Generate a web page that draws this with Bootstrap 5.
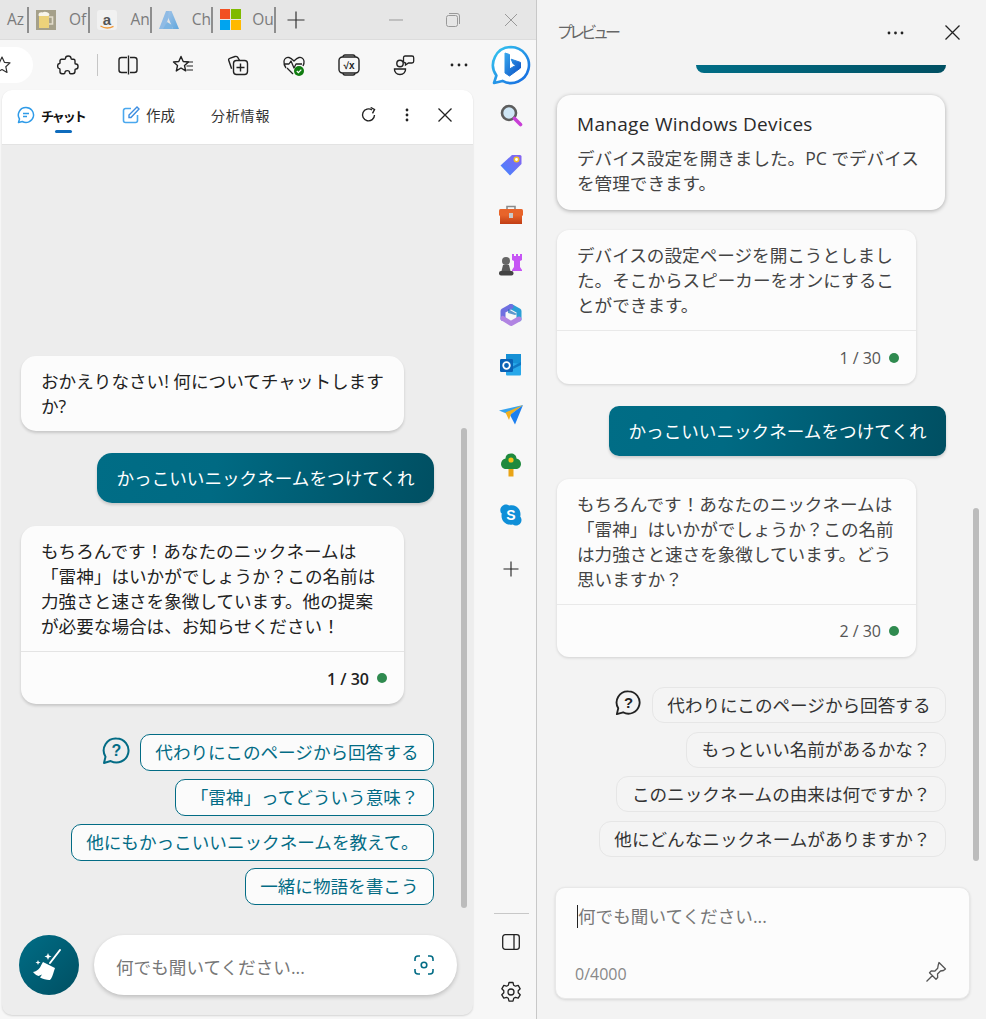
<!DOCTYPE html>
<html lang="ja">
<head>
<meta charset="utf-8">
<title>Edge サイドバー</title>
<link rel="stylesheet" href="https://cdn.jsdelivr.net/npm/bootstrap@5.3.0/dist/css/bootstrap.min.css">
<style>
html,body{margin:0;height:100%;overflow:hidden}
body{width:986px;height:1019px;background:#f3f3f3;font-family:"Open Sans","Noto Sans CJK JP",sans-serif;font-size:17.6px;line-height:25px;color:#222}
svg{display:block;flex:none}
.browser-side{width:537px;height:1019px;border-right:1px solid #c8c8c8;background:#f7f7f7;flex:none}
.tabstrip{height:40px;background:#e6e6e6;font-size:15.5px;color:#7b7b7b;border-bottom:1px solid #dcdcdc}
.tabcell{width:61.4px;height:26px;border-right:2px solid #8e8e8e;padding-left:7px;gap:13px;white-space:nowrap;flex:none}
.tabcell.first{width:29px}
.tabcell.last{width:62.5px;gap:11px}
.newtab-plus{margin-left:10px}
.winbtn{position:absolute;top:0;height:40px;width:40px}
.tool-area{width:473px;flex:none}
.toolbar{height:50px;flex:none}
.addr-pill{width:33px;height:36px;background:#fff;border-radius:0 18px 18px 0;flex:none;overflow:hidden}
.toolslot{width:55.2px;flex:none}
.tool-sep{width:1px;height:22px;background:#c6c6c6;flex:none;margin:0 2px 0 2.300px}
.copilot-panel{margin-left:2px;height:925px;width:471px;background:#ededed;border-radius:10px;box-shadow:0 1px 2px rgba(0,0,0,.14);overflow:hidden}
.panel-head{height:55px;background:#fff;border-bottom:1px solid #e3e3e3;font-size:14px;flex:none}
.ptab{font-size:14px;color:#333;letter-spacing:.5px;white-space:nowrap;line-height:20px;position:absolute;top:16px}
.ptab.on{font-weight:700;color:#111;letter-spacing:-2px;font-size:13px}
.ptab-line{position:absolute;left:53px;top:40px;width:17px;height:3px;background:#0f6cbd;border-radius:2px}
.chat-flow{padding:0 39px 0 19px}
.msg-in{background:#fcfcfc;border:0;border-radius:15px;width:383px;box-shadow:0 2px 3px rgba(0,0,0,.16)}
.msg-body{padding:12.5px 20px;color:#222}
.msg-foot{background:transparent;border-top:1px solid #e4e4e4;border-radius:0;height:53px;padding:0 17px 0 0;color:#222;font-size:16px;font-weight:600}
.foot-label{padding-top:2px}
.status-dot{width:10px;height:10px;border-radius:50%;background:#2f8a4f;margin-left:8px;flex:none}
.msg-out{align-self:flex-end;height:50px;padding:0 19.5px;border-radius:15px;color:#fff;background:linear-gradient(100deg,#006d86 0%,#006a83 35%,#004f62 100%);box-shadow:0 2px 3px rgba(0,0,0,.16);white-space:nowrap}
.sugg-btn{height:37px;padding:0 14.5px;font-size:17.6px;line-height:25px;border-radius:10px;border:1px solid #036c85;background:#fbfbfb;color:#036c85;white-space:nowrap;margin-top:8px}
.sugg-btn.lead-btn{margin-top:0}
.sugg-btn.tail-btn{margin-top:7px}
.left-compose{height:60px;flex:none;margin:0 -36px 20px -2px}
.broom-btn{width:60px;height:60px;background:linear-gradient(135deg,#006d86,#004f62);flex:none}
.ask-pill{width:363px;height:60px;background:#fff;border-radius:30px;box-shadow:0 2px 4px rgba(0,0,0,.2);margin-left:15px;padding:0 22px;color:#777}
.ask-text{padding-top:4px}
.scrollthumb{position:absolute;width:6px;background:#bcbcbc;border-radius:3px}
.side-rail{width:63px;height:979px;flex:none;padding-left:13px}
.railslot{height:50px;flex:none}
.rail-sep{width:35px;height:1px;background:#c8c8c8;margin:0 auto}
.preview-pane{width:449px;height:1019px;flex:none;background:#f3f3f3;padding-left:20px;overflow:hidden}
.preview-head{height:65px;flex:none;padding-right:26px}
.preview-title{font-size:16px;color:#666;letter-spacing:-4px;white-space:nowrap}
.stub{width:250px;height:8px;margin-left:139px;border-radius:0 0 12px 12px;background:linear-gradient(100deg,#006d86,#004f62);flex:none}
.device-note{width:388px;height:115px;background:#fcfcfc;border:0;border-radius:14px;box-shadow:0 1px 4px rgba(0,0,0,.3);padding:17px 20px 0;color:#444}
.device-note h2{font-size:19px;line-height:25px;font-weight:500;color:#2a2a2a;margin:0 0 9px;letter-spacing:.3px;white-space:nowrap}
.msg-pre{background:#fcfcfc;border:0;border-radius:12px;width:359px;box-shadow:0 1px 3px rgba(0,0,0,.14)}
.msg-pre .msg-body{color:#444}
.msg-pre .msg-foot{font-weight:400;color:#555;border-color:#e9e9e9}
.msg-pre .msg-foot.tall{height:54px}
.msg-out.pre{margin-right:40px;border-radius:10px}
.sugg-soft{height:36px;padding:0 14.5px;font-size:17.6px;line-height:25px;border-radius:12px;border:1px solid #e6e6e6;background:#f4f4f4;color:#333;white-space:nowrap}
.compose-box{width:415px;height:112px;margin-left:-2px;background:#fcfcfc;border:1px solid #e8e8e8;border-radius:10px;box-shadow:0 1px 3px rgba(0,0,0,.12);color:#777;flex:none}
.caret-bar{position:absolute;left:21px;top:17px;width:1px;height:23px;background:#222}
.ph-line{padding:16px 0 0 22px}
.count-line{position:absolute;left:19px;bottom:11px;font-size:16px;color:#888}
.pin-at{position:absolute;right:22px;bottom:15px}
</style>
</head>
<body>
<svg width="0" height="0" style="position:absolute"><defs>
<linearGradient id="g-ring" x1="0" y1="0" x2="1" y2="1"><stop offset="0" stop-color="#37c8ef"/><stop offset="1" stop-color="#1467e0"/></linearGradient>
<linearGradient id="g-b" x1="0" y1="0" x2="1" y2="1"><stop offset="0" stop-color="#37a8ee"/><stop offset="1" stop-color="#0b4fc4"/></linearGradient>
<linearGradient id="g-tag" x1="0" y1="1" x2="1" y2="0"><stop offset="0" stop-color="#3f86ff"/><stop offset="1" stop-color="#8a63f0"/></linearGradient>
<linearGradient id="g-box" x1="0" y1="0" x2="0" y2="1"><stop offset="0" stop-color="#e8642a"/><stop offset="1" stop-color="#c13d14"/></linearGradient>
<linearGradient id="g-az" x1="0" y1="0" x2="1" y2="1"><stop offset="0" stop-color="#9fc3e8"/><stop offset="1" stop-color="#5fa6dc"/></linearGradient>
</defs></svg>

<div class="d-flex">
<section class="browser-side d-flex flex-column">
  <div class="tabstrip d-flex align-items-center position-relative flex-none">
    <div class="tabcell first d-flex align-items-center">Az</div>
    <div class="tabcell d-flex align-items-center">
      <svg width="20" height="20" viewBox="0 0 20 20"><rect width="20" height="20" fill="#a5a08a"/><path d="M3 5h10v13H3z" fill="#ecd27a"/><path d="M13 7h3.500v7H13" fill="none" stroke="#e2dccb" stroke-width="1.600"/><path d="M2.500 5c0-3 3-3 4-2.500 2-1.500 5-.5 6.500 1 1 1 0 2.500-1 2.500H4C3 6 2.500 6 2.500 5z" fill="#f8f5ea"/></svg><span>Of</span></div>
    <div class="tabcell d-flex align-items-center">
      <svg width="20" height="20" viewBox="0 0 20 20"><rect width="20" height="20" rx="3" fill="#f1f1f1"/><text x="10" y="14.500" text-anchor="middle" font-family="Liberation Sans,sans-serif" font-size="15" font-weight="700" fill="#555">a</text><path d="M3.500 16c4 2.400 9 2.400 13 .3" fill="none" stroke="#f29a38" stroke-width="1.400"/></svg><span>An</span></div>
    <div class="tabcell d-flex align-items-center">
      <svg width="20" height="20" viewBox="0 0 20 20"><path d="M7 1h5l-6.500 18H0z" fill="#8fbbe5"/><path d="M10 1h2.500L20 19h-6L9 7z" fill="url(#g-az)"/><path d="M8 12l5 3 1 4H4z" fill="#7cb4e2"/></svg><span>Ch</span></div>
    <div class="tabcell last d-flex align-items-center">
      <svg width="21" height="21" viewBox="0 0 21 21"><rect width="10" height="10" fill="#f25022"/><rect x="11" width="10" height="10" fill="#7fba00"/><rect y="11" width="10" height="10" fill="#00a4ef"/><rect x="11" y="11" width="10" height="10" fill="#ffb900"/></svg><span>Ou</span></div>
    <svg class="newtab-plus" width="20" height="20" viewBox="0 0 20 20"><path d="M10 1.500v17M1.500 10h17" stroke="#333" stroke-width="1.200"/></svg>
    <div class="winbtn d-flex align-items-center justify-content-center" style="left:376px"><svg width="14" height="2" viewBox="0 0 14 2"><path d="M0 1h14" stroke="#999" stroke-width="1"/></svg></div>
    <div class="winbtn d-flex align-items-center justify-content-center" style="left:433px"><svg width="14" height="14" viewBox="0 0 14 14"><rect x=".5" y="2.500" width="11" height="11" rx="2" fill="none" stroke="#999"/><path d="M3 .5h8a2.500 2.500 0 0 1 2.500 2.500v8" fill="none" stroke="#999"/></svg></div>
    <div class="winbtn d-flex align-items-center justify-content-center" style="left:491px"><svg width="14" height="14" viewBox="0 0 14 14"><path d="M1 1l12 12M13 1L1 13" stroke="#999" stroke-width="1"/></svg></div>
  </div>

  <div class="d-flex flex-grow-1">
    <div class="tool-area d-flex flex-column">
      <div class="toolbar d-flex align-items-center">
        <div class="addr-pill d-flex align-items-center">
          <svg style="margin-left:-8px" width="20" height="20" viewBox="0 0 20 20"><path d="M10 2l2.400 5.300 5.600.6-4.200 3.800 1.200 5.700L10 14.500l-5 2.900 1.200-5.700L2 7.900l5.600-.6z" fill="none" stroke="#333" stroke-width="1.200" stroke-linejoin="round"/></svg>
        </div>
        <div class="toolslot d-flex justify-content-center" style="margin-left:7px">
          <svg width="22" height="22" viewBox="0 0 22 22"><path d="M8.500 4.200c0-3 5.500-3 5.500 0 0 .6.400 1 1 1h1.500a1.500 1.500 0 0 1 1.500 1.500v2.500c0 .6.500.8 1 .8 2.700 0 2.700 5 0 5-.5 0-1 .3-1 .8v1.400a2.500 2.500 0 0 1-2.500 2.500h-2c-.6 0-.9-.5-.9-1 0-2.800-4.700-2.800-4.700 0 0 .5-.4 1-1 1H5a2 2 0 0 1-2-2v-2.300c0-.6-.5-1-1-1-1.800-.1-1.800-4.500 0-4.600.5 0 1-.4 1-1V6.700a1.500 1.500 0 0 1 1.500-1.500h3c.6 0 1-.4 1-1z" fill="none" stroke="#222" stroke-width="1.400"/></svg>
        </div>
        <div class="tool-sep"></div>
        <div class="toolslot d-flex justify-content-center">
          <svg width="22" height="22" viewBox="0 0 22 22"><path d="M10 3.500H4.500A2.500 2.500 0 0 0 2 6v10a2.500 2.500 0 0 0 2.500 2.500H10M13 3.500h4.500A2.500 2.500 0 0 1 20 6v10a2.500 2.500 0 0 1-2.500 2.500H13M11.500 1.500v19" fill="none" stroke="#222" stroke-width="1.400"/></svg>
        </div>
        <div class="toolslot d-flex justify-content-center">
          <svg width="22" height="22" viewBox="0 0 22 22"><path d="M9 2.500l2.200 5 5.300.5-4 3.600 1.200 5.300L9 14l-4.700 2.900 1.200-5.300-4-3.600 5.300-.5z" fill="none" stroke="#222" stroke-width="1.400" stroke-linejoin="round"/><path d="M14.500 8H21M14.500 12H21M14.500 16H21" stroke="#222" stroke-width="1.200"/></svg>
        </div>
        <div class="toolslot d-flex justify-content-center">
          <svg width="22" height="22" viewBox="0 0 22 22"><path d="M8 2.500L2.700 4.300a1.500 1.500 0 0 0-1 1.900l2.900 8.500M8 2.500c1-.3 2-.1 2.600.7l2 3.300" fill="none" stroke="#222" stroke-width="1.400"/><rect x="6.500" y="6.500" width="14" height="14" rx="3" fill="#f7f7f7" stroke="#222" stroke-width="1.400"/><path d="M13.500 9.500v8M9.500 13.500h8" stroke="#222" stroke-width="1.400"/></svg>
        </div>
        <div class="toolslot d-flex justify-content-center">
          <svg width="24" height="24" viewBox="0 0 24 24"><path d="M4 15C2.500 13 1.500 11 2 8c.5-3 3-4 5-3.500 2 .5 3.500 2 5 3.500 1.500-1.500 3-3 5-3.500 2-.5 4.500.5 5 3.500.3 2-.3 3.500-1 5M2 11h5l2-3 3 7 2-4h6M5 15l6 6" fill="none" stroke="#222" stroke-width="1.300" stroke-linejoin="round"/><circle cx="17" cy="18" r="5" fill="#107c10"/><path d="M14.800 18l1.600 1.600 2.900-3" fill="none" stroke="#fff" stroke-width="1.200"/></svg>
        </div>
        <div class="toolslot d-flex justify-content-center">
          <svg width="24" height="24" viewBox="0 0 24 24"><rect x="2" y="4" width="20" height="16" rx="3.500" fill="none" stroke="#222" stroke-width="1.400"/><path d="M6 4c0-1.500 1-2 2-2h8c1 0 2 .5 2 2M6 20c0 1.500 1 2 2 2h8c1 0 2-.5 2-2" fill="none" stroke="#222" stroke-width="1.300"/><text x="12" y="16" text-anchor="middle" font-family="Liberation Sans,sans-serif" font-size="10" font-weight="700" fill="#222">√x</text></svg>
        </div>
        <div class="toolslot d-flex justify-content-center">
          <svg width="22" height="22" viewBox="0 0 22 22"><circle cx="7" cy="9.500" r="3.200" fill="none" stroke="#222" stroke-width="1.400"/><path d="M1.500 15h11c.3 3-2 5.500-5.500 5.500S1.200 18 1.500 15z" fill="none" stroke="#222" stroke-width="1.400"/><path d="M12 2h7a1.700 1.700 0 0 1 1.700 1.700v3.600A1.700 1.700 0 0 1 19 9h-3.500L12.500 11V9a1.900 1.900 0 0 1-2-1.700V3.700A1.700 1.700 0 0 1 12 2z" fill="none" stroke="#222" stroke-width="1.300"/></svg>
        </div>
        <div class="toolslot d-flex justify-content-center">
          <svg width="18" height="4" viewBox="0 0 18 4"><circle cx="2" cy="2" r="1.400" fill="#222"/><circle cx="9" cy="2" r="1.400" fill="#222"/><circle cx="16" cy="2" r="1.400" fill="#222"/></svg>
        </div>
      </div>

      <main class="copilot-panel d-flex flex-column position-relative">
        <div class="panel-head d-flex align-items-center position-relative">
          <svg class="position-absolute" style="left:15px;top:16px" width="18" height="18" viewBox="0 0 18 18"><path d="M9 1.500a7.500 7.500 0 1 1-3.700 14L1.500 16.500l1-3.500A7.500 7.500 0 0 1 9 1.500z" fill="none" stroke="#2f9be8" stroke-width="1.500" stroke-linejoin="round"/><path d="M6 7.500h6M6 10.500h4" stroke="#2f9be8" stroke-width="1.300"/></svg>
          <span class="ptab on" style="left:39px">チャット</span>
          <span class="ptab-line"></span>
          <svg class="position-absolute" style="left:120px;top:16px" width="18" height="18" viewBox="0 0 18 18"><path d="M9 2.500H3.500a2 2 0 0 0-2 2v10a2 2 0 0 0 2 2h10a2 2 0 0 0 2-2V9" fill="none" stroke="#4aa8ee" stroke-width="1.600"/><path d="M7 11.500V9L15 1l2 2-8 8.500z" fill="none" stroke="#3d8de0" stroke-width="1.400"/></svg>
          <span class="ptab" style="left:144px;letter-spacing:0;font-size:14.500px">作成</span>
          <span class="ptab" style="left:209px;letter-spacing:.8px">分析情報</span>
          <svg class="position-absolute" style="left:359px;top:17px" width="16" height="16" viewBox="0 0 16 16"><path d="M13.500 8A6 6 0 1 1 11 3" fill="none" stroke="#222" stroke-width="1.400"/><path d="M10.200.5L14 2.500l-2 3.800" fill="none" stroke="#222" stroke-width="1.400" transform="translate(-.5 0)"/></svg>
          <svg class="position-absolute" style="left:403px;top:18px" width="4" height="14" viewBox="0 0 4 14"><circle cx="2" cy="2" r="1.400" fill="#222"/><circle cx="2" cy="7" r="1.400" fill="#222"/><circle cx="2" cy="12" r="1.400" fill="#222"/></svg>
          <svg class="position-absolute" style="left:436px;top:18px" width="14" height="14" viewBox="0 0 14 14"><path d="M.5.5l13 13M13.500.5l-13 13" stroke="#222" stroke-width="1.300"/></svg>
        </div>

        <div class="chat-flow d-flex flex-column justify-content-end flex-grow-1">
          <div class="card msg-in"><div class="msg-body">おかえりなさい! 何についてチャットしますか?</div></div>
          <div class="msg-out d-flex align-items-center" style="margin-top:22px">かっこいいニックネームをつけてくれ</div>
          <div class="card msg-in" style="margin-top:23px">
            <div class="msg-body">もちろんです！あなたのニックネームは「雷神」はいかがでしょうか？この名前は力強さと速さを象徴しています。他の提案が必要な場合は、お知らせください！</div>
            <div class="card-footer msg-foot d-flex align-items-center justify-content-end"><span class="foot-label">1 / 30</span><span class="status-dot"></span></div>
          </div>
          <div class="d-flex flex-column align-items-end" style="margin-top:30px;margin-bottom:30px">
            <div class="d-flex align-items-center">
              <svg style="margin-right:10px;margin-top:-4px" width="28" height="28" viewBox="0 0 28 28"><path d="M14.500 1.500a12 12 0 1 1-5.800 22.500L2 26l1.500-6.300A12 12 0 0 1 14.500 1.500z" fill="none" stroke="#036c85" stroke-width="2" stroke-linejoin="round"/><text x="14.500" y="19" text-anchor="middle" font-family="Liberation Sans,sans-serif" font-size="16" font-weight="700" fill="#036c85">?</text></svg>
              <button class="btn sugg-btn lead-btn">代わりにこのページから回答する</button>
            </div>
            <button class="btn sugg-btn">「雷神」ってどういう意味？</button>
            <button class="btn sugg-btn">他にもかっこいいニックネームを教えて。</button>
            <button class="btn sugg-btn tail-btn">一緒に物語を書こう</button>
          </div>
          <div class="left-compose d-flex">
            <div class="broom-btn rounded-circle d-flex align-items-center justify-content-center">
              <svg width="34" height="34" viewBox="0 0 34 34"><path d="M28 2L18 15" stroke="#fff" stroke-width="2" stroke-linecap="round"/><path d="M11 14l12 6-1 3c-1 3-2 7-4 9-2 .5-7-1-10-2.500l2-3-3.500 1.500C4 27 2 25.500 1 24c3-.5 5-2 7-4.500.8-1.500 2-4 3-5.500z" fill="#fff"/><path d="M16 5l1 2.500 2.500 1-2.500 1-1 2.500-1-2.500-2.500-1 2.500-1zM6 12l.7 1.800 1.800.7-1.800.7L6 17l-.7-1.800-1.800-.7 1.800-.7z" fill="#fff"/></svg>
            </div>
            <div class="ask-pill d-flex align-items-center justify-content-between">
              <span class="ask-text">何でも聞いてください...</span>
              <svg style="margin-right:1px" width="20" height="20" viewBox="0 0 20 20"><path d="M1 6V4a3 3 0 0 1 3-3h2M14 1h2a3 3 0 0 1 3 3v2M19 14v2a3 3 0 0 1-3 3h-2M6 19H4a3 3 0 0 1-3-3v-2" fill="none" stroke="#036c85" stroke-width="1.600"/><circle cx="10" cy="10" r="2.800" fill="none" stroke="#036c85" stroke-width="1.600"/></svg>
            </div>
          </div>
        </div>
        <div class="scrollthumb" style="left:459px;top:338px;height:480px"></div>
      </main>
    </div>

    <aside class="side-rail d-flex flex-column">
      <div class="railslot d-flex justify-content-center align-items-center">
        <svg width="40" height="40" viewBox="0 0 40 40"><path d="M20 2a18 18 0 1 1-8.500 33.900L3 38l2.400-7.500A18 18 0 0 1 20 2z" fill="#fff" stroke="url(#g-ring)" stroke-width="2.600" stroke-linejoin="round"/><path d="M14 8l4.500 1.500V24l6.500-3.800-3-1.500-1.800-4.500 9.300 3.200V23L18.500 31 14 28z" fill="url(#g-b)" stroke="url(#g-b)" stroke-width="1" stroke-linejoin="round"/></svg>
      </div>
      <div class="railslot d-flex justify-content-center align-items-center">
        <svg width="24" height="24" viewBox="0 0 24 24"><circle cx="10" cy="10" r="7" fill="#cfe6f5" stroke="#5d5d5d" stroke-width="2.600"/><path d="M15.500 15.500l6 6" stroke="#c83fd6" stroke-width="3.600" stroke-linecap="round"/></svg>
      </div>
      <div class="railslot d-flex justify-content-center align-items-center">
        <svg width="24" height="24" viewBox="0 0 24 24"><path d="M13 2h8a1.500 1.500 0 0 1 1.500 1.500V11L11 22.500 1.500 12.500z" fill="url(#g-tag)"/><circle cx="17.500" cy="6.500" r="2.200" fill="#fff" stroke="#f4c025" stroke-width="1.500"/></svg>
      </div>
      <div class="railslot d-flex justify-content-center align-items-center">
        <svg width="24" height="22" viewBox="0 0 24 22"><path d="M8 5V2.500h8V5" fill="none" stroke="#8a8a8a" stroke-width="1.600"/><rect y="5" width="24" height="7" rx="1.500" fill="#e8642a"/><rect x="1" y="11" width="22" height="9" fill="url(#g-box)"/><rect x="10" y="9" width="4" height="5" fill="#c9c9c9"/></svg>
      </div>
      <div class="railslot d-flex justify-content-center align-items-center">
        <svg width="24" height="24" viewBox="0 0 24 24"><path d="M14 1h2v2h2V1h2v2h2V1h2v6l-2 1v6l2 3v1H14v-1l2-3V8l-2-1z" fill="#c655f5" transform="translate(-1 0)"/><circle cx="7" cy="8" r="4" fill="#666"/><path d="M4 12h6l1.500 6H2.500z" fill="#5a5a5a"/><rect y="18" width="14.500" height="4.500" rx="2" fill="#444"/></svg>
      </div>
      <div class="railslot d-flex justify-content-center align-items-center">
        <svg width="24" height="24" viewBox="0 0 24 24"><g fill="none" stroke-width="5" stroke-linejoin="round" stroke-linecap="round"><path d="M12 3.500l8 4.500v8" stroke="#2a9fd6"/><path d="M12 3.500L4 8v7.500" stroke="#6f6fe0"/><path d="M4 15.500L12 20.500l8-4.500" stroke="#b184e2"/></g><path d="M9 6l9 5-2 1-7-2z" fill="#1b6fb8" opacity=".7"/></svg>
      </div>
      <div class="railslot d-flex justify-content-center align-items-center">
        <svg width="22" height="22" viewBox="0 0 22 22"><rect x="6" width="15" height="11" fill="#1690d5"/><path d="M6 8l15 2v10.500a1 1 0 0 1-1 1H7a1 1 0 0 1-1-1z" fill="#28a8ea"/><path d="M10 14l11-6v3l-8 4z" fill="#0f78c4"/><rect y="5" width="13" height="13" rx="1.200" fill="#0a62b6"/><circle cx="6.500" cy="11.500" r="3.300" fill="none" stroke="#fff" stroke-width="1.800"/></svg>
      </div>
      <div class="railslot d-flex justify-content-center align-items-center">
        <svg width="24" height="20" viewBox="0 0 24 20"><path d="M0 5.500L24 0 11 10z" fill="#36a3ee"/><path d="M24 0L11 10l5 9.500z" fill="#1c7ff0"/><path d="M24 0L6.500 7.500 10 15l2-6z" fill="#f2b01e"/></svg>
      </div>
      <div class="railslot d-flex justify-content-center align-items-center">
        <svg width="20" height="24" viewBox="0 0 20 24"><rect x="7.500" y="14" width="5" height="9.500" fill="#e9a416"/><path d="M10 .5c3 0 5.500 2 5.500 5 3 .5 4.500 3 4.500 5.500 0 3-2.500 5-5 5H5c-2.500 0-5-2-5-5 0-2.500 1.500-5 4.500-5.500 0-3 2.500-5 5.500-5z" fill="#1f8a3d"/><circle cx="10" cy="7" r="2.600" fill="#f7c21c"/></svg>
      </div>
      <div class="railslot d-flex justify-content-center align-items-center">
        <svg width="22" height="22" viewBox="0 0 22 22"><path d="M6 .5c1.500 0 2.500.7 3.500 1 .7-.2 1-.3 2-.3 5 0 9 4 9 9 0 1-.1 1.500-.3 2.300.8 1 1.300 2.300 1.300 3.500 0 3-2.300 5.500-5.500 5.500-1.200 0-2.500-.5-3.500-1-.7.1-1.200.2-2 .2-5 0-9-4-9-9 0-.8.1-1.500.3-2.200C.7 9 .3 7.500.3 6 .3 3 3 .5 6 .5z" fill="#0f8fd8"/><text x="11" y="16" text-anchor="middle" font-family="Liberation Sans,sans-serif" font-size="14" font-weight="700" fill="#fff">S</text></svg>
      </div>
      <div class="railslot d-flex justify-content-center align-items-center" style="margin-top:4px">
        <svg width="16" height="16" viewBox="0 0 16 16"><path d="M8 .5v15M.5 8h15" stroke="#222" stroke-width="1.100"/></svg>
      </div>
      <div class="flex-grow-1"></div>
      <div class="rail-sep"></div>
      <div class="railslot d-flex justify-content-center align-items-center" style="margin-top:3px">
        <svg width="18" height="16" viewBox="0 0 18 16"><rect x=".7" y=".7" width="16.600" height="14.600" rx="2.500" fill="none" stroke="#222" stroke-width="1.300"/><path d="M12 .7v14.600" stroke="#222" stroke-width="1.300"/></svg>
      </div>
      <div class="railslot d-flex justify-content-center align-items-center" style="margin-bottom:2px">
        <svg width="22" height="22" viewBox="0 0 22 22"><path d="M9 1.500h4l.7 2.800 1.700.9 2.800-.8 2 3.400-2 2 0 2 2 2-2 3.400-2.800-.8-1.700.9-.7 2.800H9l-.7-2.800-1.700-.9-2.800.8-2-3.400 2-2 0-2-2-2 2-3.400 2.800.8 1.700-.9z" fill="none" stroke="#222" stroke-width="1.300" stroke-linejoin="round"/><circle cx="11" cy="11" r="3" fill="none" stroke="#222" stroke-width="1.300"/></svg>
      </div>
    </aside>
  </div>
</section>

<section class="preview-pane d-flex flex-column position-relative">
  <header class="preview-head d-flex align-items-center justify-content-between">
    <span class="preview-title">プレビュー</span>
    <div class="d-flex align-items-center" style="gap:41px">
      <svg width="17" height="4" viewBox="0 0 17 4"><circle cx="2" cy="2" r="1.400" fill="#222"/><circle cx="8.500" cy="2" r="1.400" fill="#222"/><circle cx="15" cy="2" r="1.400" fill="#222"/></svg>
      <svg width="15" height="15" viewBox="0 0 15 15"><path d="M.5.5l14 14M14.500.5l-14 14" stroke="#222" stroke-width="1.300"/></svg>
    </div>
  </header>
  <div class="stub"></div>
  <div class="card device-note" style="margin-top:22px">
    <h2>Manage Windows Devices</h2>
    <div>デバイス設定を開きました。PC でデバイスを管理できます。</div>
  </div>
  <div class="card msg-pre" style="margin-top:20px">
    <div class="msg-body">デバイスの設定ページを開こうとしました。そこからスピーカーをオンにすることができます。</div>
    <div class="card-footer msg-foot tall d-flex align-items-center justify-content-end"><span class="foot-label">1 / 30</span><span class="status-dot"></span></div>
  </div>
  <div class="msg-out pre d-flex align-items-center" style="margin-top:22px">かっこいいニックネームをつけてくれ</div>
  <div class="card msg-pre" style="margin-top:23px">
    <div class="msg-body">もちろんです！あなたのニックネームは「雷神」はいかがでしょうか？この名前は力強さと速さを象徴しています。どう思いますか？</div>
    <div class="card-footer msg-foot d-flex align-items-center justify-content-end"><span>2 / 30</span><span class="status-dot"></span></div>
  </div>
  <div class="d-flex flex-column align-items-end" style="margin-top:30px;margin-right:40px;gap:8.700px">
    <div class="d-flex align-items-center">
      <svg style="margin-right:11px;margin-top:-4px" width="26" height="26" viewBox="0 0 28 28"><path d="M14.500 1.500a12 12 0 1 1-5.800 22.500L2 26l1.500-6.300A12 12 0 0 1 14.500 1.500z" fill="none" stroke="#222" stroke-width="2" stroke-linejoin="round"/><text x="14.500" y="19" text-anchor="middle" font-family="Liberation Sans,sans-serif" font-size="16" font-weight="700" fill="#222">?</text></svg>
      <button class="btn sugg-soft">代わりにこのページから回答する</button>
    </div>
    <button class="btn sugg-soft">もっといい名前があるかな？</button>
    <button class="btn sugg-soft">このニックネームの由来は何ですか？</button>
    <button class="btn sugg-soft">他にどんなニックネームがありますか？</button>
  </div>
  <div class="compose-box position-relative" style="margin-top:30px">
    <span class="caret-bar"></span>
    <div class="ph-line">何でも聞いてください...</div>
    <span class="count-line">0/4000</span>
    <svg class="pin-at" width="22" height="22" viewBox="0 0 22 22"><path d="M14 1.500l6.500 6.500-2 1.500-3 .5-3 3 .2 3.500-1.700 1.700L4.500 11.700l1.700-1.700 3.500.2 3-3 .5-3zM7.500 14.500L1.500 20.500" fill="none" stroke="#555" stroke-width="1.300" stroke-linejoin="round"/></svg>
  </div>
  <div class="scrollthumb" style="left:436px;top:508px;height:353px"></div>
</section>
</div>
<script src="https://cdn.jsdelivr.net/npm/bootstrap@5.3.0/dist/js/bootstrap.bundle.min.js"></script>
</body>
</html>
